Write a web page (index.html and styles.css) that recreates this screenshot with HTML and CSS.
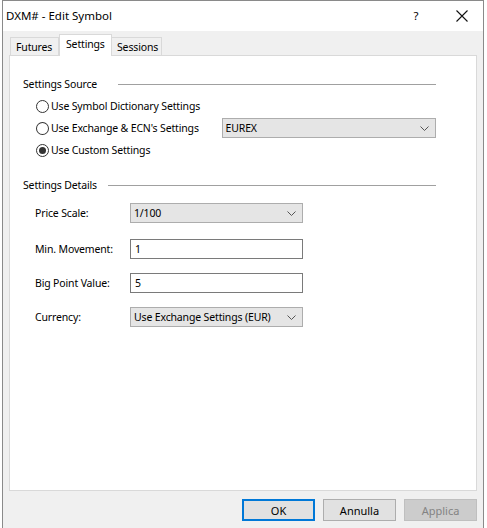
FILE: index.html
```html
<!DOCTYPE html>
<html lang="en">

<head>
    <meta charset="UTF-8">
    <title>DXM# - Edit Symbol</title>
    <link rel="stylesheet" href="styles.css">
</head>

<body>
    <div class="window">
        <div class="titlebar">
            <span class="title">DXM# - Edit Symbol</span>
            <span class="help">?</span>
            <span class="close">
                <svg width="12" height="12" viewBox="0 0 12 12">
                    <path d="M0.5 0.5 L11.5 11.5 M11.5 0.5 L0.5 11.5" stroke="#111" stroke-width="1.1" fill="none" />
                </svg>
            </span>
        </div>

        <div class="client">
            <div class="tabs">
                <div class="tab">Futures</div>
                <div class="tab active">Settings</div>
                <div class="tab">Sessions</div>
            </div>

            <div class="panel">
                <!-- Settings Source -->
                <div class="group-head first">
                    <span>Settings Source</span>
                    <div class="rule"></div>
                </div>
                <div class="radio-row">
                    <span class="radio"></span>
                    <span>Use Symbol Dictionary Settings</span>
                </div>
                <div class="radio-row">
                    <span class="radio"></span>
                    <span class="radio-label">Use Exchange &amp; ECN's Settings</span>
                    <div class="combo wide">
                        <span>EUREX</span>
                        <span class="chevron"><svg width="9" height="5" viewBox="0 0 9 5"><path d="M0.5 0.5 L4.5 4.5 L8.5 0.5" stroke="#555" fill="none" /></svg></span>
                    </div>
                </div>
                <div class="radio-row">
                    <span class="radio checked"></span>
                    <span>Use Custom Settings</span>
                </div>

                <!-- Settings Details -->
                <div class="group-head second">
                    <span>Settings Details</span>
                    <div class="rule"></div>
                </div>
                <div class="field-row r1">
                    <span class="field-label">Price Scale:</span>
                    <div class="combo">
                        <span>1/100</span>
                        <span class="chevron"><svg width="9" height="5" viewBox="0 0 9 5"><path d="M0.5 0.5 L4.5 4.5 L8.5 0.5" stroke="#555" fill="none" /></svg></span>
                    </div>
                </div>
                <div class="field-row r2">
                    <span class="field-label">Min. Movement:</span>
                    <div class="textbox">1</div>
                </div>
                <div class="field-row r3">
                    <span class="field-label">Big Point Value:</span>
                    <div class="textbox">5</div>
                </div>
                <div class="field-row r3">
                    <span class="field-label">Currency:</span>
                    <div class="combo">
                        <span>Use Exchange Settings (EUR)</span>
                        <span class="chevron"><svg width="9" height="5" viewBox="0 0 9 5"><path d="M0.5 0.5 L4.5 4.5 L8.5 0.5" stroke="#555" fill="none" /></svg></span>
                    </div>
                </div>
            </div>

            <div class="buttons">
                <button class="btn default">OK</button>
                <button class="btn">Annulla</button>
                <button class="btn disabled">Applica</button>
            </div>
        </div>
    </div>
</body>

</html>
```

FILE: styles.css
```css
* {
    margin: 0;
    padding: 0;
    box-sizing: border-box;
}

body {
    background: #ffffff;
    font-family: "Noto Sans", "Liberation Sans", sans-serif;
    font-size: 10.5px;
    letter-spacing: -0.15px;
    color: #000;
    padding-left: 2px;
}

.window {
    width: 482px;
    height: 528px;
    border-left: 1px solid #8a8a8a;
    border-right: 1px solid #8a8a8a;
    border-top: 1px solid #8a8a8a;
    display: flex;
    flex-direction: column;
}

/* Title bar */
.titlebar {
    height: 30px;
    background: #ffffff;
    display: flex;
    align-items: center;
    font-size: 11.5px;
    letter-spacing: 0;
}

.title {
    flex: 1;
    padding-left: 3px;
    padding-bottom: 2px;
}

.help {
    width: 20px;
    text-align: center;
    margin-right: 30px;
    padding-bottom: 2px;
}

.close {
    width: 12px;
    height: 12px;
    margin-right: 15px;
    display: flex;
}

/* Client area */
.client {
    flex: 1;
    background: #f0f0f0;
    padding: 3px 6px 0 6px;
    display: flex;
    flex-direction: column;
}

.tabs {
    display: flex;
    align-items: flex-end;
    height: 21px;
    padding-left: 1px;
    position: relative;
    z-index: 1;
}

.tab {
    height: 18px;
    padding: 0 5px;
    border: 1px solid #d9d9d9;
    border-bottom: none;
    background: #f0f0f0;
    line-height: 18px;
    width: 49px;
}

.tab + .tab {
    border-left: none;
}

.tab.active {
    height: 22px;
    width: 53px;
    margin-bottom: -1px;
    background: #ffffff;
    border-left: 1px solid #d9d9d9;
    border-right: 1px solid #d9d9d9;
    line-height: 19px;
    padding-left: 6px;
}

.tab.active + .tab {
    border-left: none;
    width: 50px;
}

.panel {
    height: 436px;
    background: #ffffff;
    border: 1px solid #d9d9d9;
    padding: 0 40px 0 13px;
}

/* Group headers */
.group-head {
    display: flex;
    align-items: center;
    height: 14px;
    gap: 21px;
}

.group-head span {
    padding-bottom: 1px;
}

.group-head.first {
    margin-top: 21px;
}

.group-head.second {
    margin-top: 17px;
    gap: 11px;
}

.rule {
    flex: 1;
    height: 1px;
    background: #a0a0a0;
}

/* Radio rows */
.radio-row {
    display: flex;
    align-items: center;
    height: 22px;
    padding-left: 13px;
}

.group-head.first + .radio-row {
    margin-top: 4px;
}

.radio {
    width: 13px;
    height: 13px;
    border: 1px solid #333;
    border-radius: 50%;
    margin-right: 2px;
    display: flex;
    align-items: center;
    justify-content: center;
}

.radio.checked::after {
    content: "";
    width: 7px;
    height: 7px;
    border-radius: 50%;
    background: #333;
}

.radio-label {
    width: 171px;
}

/* Combos and text boxes */
.combo {
    width: 173px;
    height: 20px;
    background: #e5e5e5;
    border: 1px solid #adadad;
    display: flex;
    align-items: center;
    justify-content: space-between;
    padding: 0 6px 0 3px;
}

.combo.wide {
    width: 215px;
}

.chevron {
    display: flex;
}

.textbox {
    width: 173px;
    height: 20px;
    background: #ffffff;
    border: 1px solid #7a7a7a;
    line-height: 18px;
    padding-left: 4px;
}

.field-row {
    display: flex;
    align-items: center;
    padding-left: 12px;
}

.field-label {
    width: 95px;
}

.field-row.r1 {
    margin-top: 11px;
}

.field-row.r2 {
    margin-top: 16px;
}

.field-row.r3 {
    margin-top: 14px;
}

/* Buttons */
.buttons {
    display: flex;
    justify-content: flex-end;
    gap: 8px;
    margin-top: 8px;
}

.btn {
    width: 73px;
    height: 22px;
    font-family: inherit;
    font-size: 11px;
    background: #e1e1e1;
    border: 1px solid #adadad;
    color: #000;
}

.btn.default {
    border: 2px solid #0078d7;
}

.btn.disabled {
    background: #cccccc;
    border-color: #bfbfbf;
    color: #838383;
}
```
